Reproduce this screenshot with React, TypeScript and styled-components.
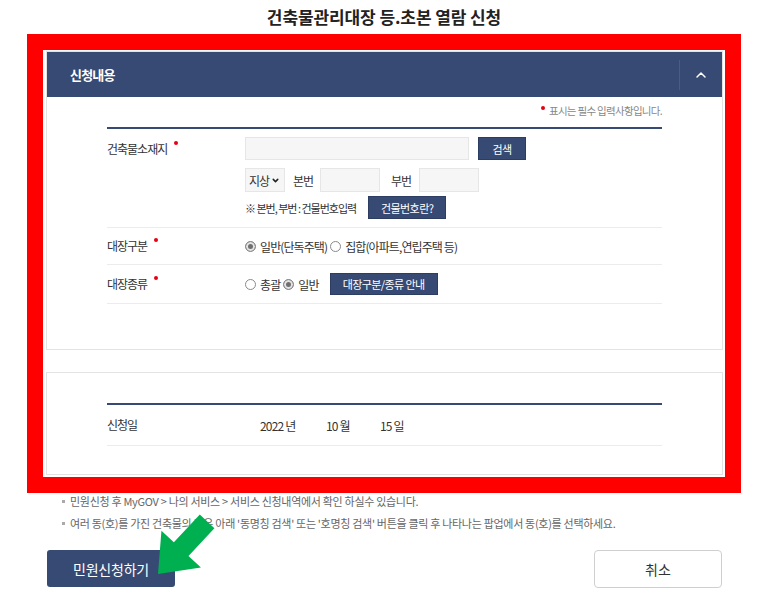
import styled, { createGlobalStyle } from "styled-components";
import { ChevronUp, ChevronDown } from "lucide-react";

const NAVY = "#374a73";

const GlobalStyle = createGlobalStyle`
  body {
    margin: 0;
    background: #fff;
    font-family: "Noto Sans CJK KR", "Noto Sans", sans-serif;
    color: #333;
  }
`;

const Page = styled.div`
  position: relative;
  width: 759px;
  height: 610px;
  overflow: hidden;
`;

const Wrap = styled.div`
  width: 714px;
  margin-left: 27px;
`;

const Title = styled.h1`
  margin: 0;
  height: 34px;
  line-height: 34px;
  text-align: center;
  font-size: 17px;
  font-weight: 700;
  letter-spacing: -0.1px;
  color: #222;
`;

const RedFrame = styled.div`
  border: 16px solid #ff0000;
  padding: 1px 2px 2px 3px;
  background: #fff;
`;

const Card = styled.div<{ $gap?: number }>`
  width: 677px;
  box-sizing: border-box;
  border: 1px solid #e3e3e3;
  margin-top: ${(p) => p.$gap ?? 0}px;
  background: #fff;
`;

const Header = styled.div`
  display: flex;
  align-items: center;
  height: 45px;
  background: ${NAVY};
  color: #fff;
`;

const HeaderTitle = styled.div`
  flex: 1;
  padding-left: 23px;
  font-size: 13px;
  font-weight: 700;
  letter-spacing: -0.8px;
`;

const Toggle = styled.div`
  width: 42px;
  height: 30px;
  display: flex;
  align-items: center;
  justify-content: center;
  border-left: 1px solid #4b5b82;
`;

const Body = styled.div<{ $top: number; $bottom: number }>`
  padding: ${(p) => p.$top}px 60px ${(p) => p.$bottom}px 60px;
`;

const Required = styled.div`
  height: 30px;
  padding-top: 7px;
  box-sizing: border-box;
  text-align: right;
  font-size: 10.5px;
  color: #888;
  letter-spacing: -0.7px;
  line-height: 14px;
`;

const Dot = styled.span`
  display: inline-block;
  width: 4px;
  height: 4px;
  border-radius: 50%;
  background: #e60012;
  margin-right: 4px;
  transform: translateY(-5px);
`;

const Table = styled.div`
  border-top: 2px solid ${NAVY};
`;

const Row = styled.div<{ $label: number; $pad: number; $align?: string }>`
  display: grid;
  grid-template-columns: ${(p) => p.$label}px 1fr;
  align-items: ${(p) => p.$align ?? "center"};
  padding: ${(p) => p.$pad}px 0;
  border-bottom: 1px solid #ececec;
`;

const Label = styled.div<{ $lineHeight?: number }>`
  font-size: 12px;
  letter-spacing: -1px;
  color: #333;
  line-height: ${(p) => p.$lineHeight ?? 20}px;
  ${Dot} {
    margin-left: 7px;
    margin-right: 0;
    transform: translateY(-9px);
  }
`;

const Stack = styled.div`
  display: flex;
  flex-direction: column;
`;

const Line = styled.div<{ $mt?: number }>`
  display: flex;
  align-items: center;
  margin-top: ${(p) => p.$mt ?? 0}px;
  font-size: 12px;
  letter-spacing: -1px;
`;

const Input = styled.div<{ $w: number; $h: number }>`
  width: ${(p) => p.$w}px;
  height: ${(p) => p.$h}px;
  box-sizing: border-box;
  background: #f6f6f6;
  border: 1px solid #e6e6e6;
`;

const Select = styled.div`
  width: 40px;
  height: 24px;
  box-sizing: border-box;
  background: #f6f6f6;
  border: 1px solid #e6e6e6;
  display: flex;
  align-items: center;
  gap: 2px;
  padding-left: 3px;
  font-size: 12px;
  letter-spacing: -1px;
  color: #333;
`;

const Word = styled.span<{ $ml: number; $w: number }>`
  margin-left: ${(p) => p.$ml}px;
  width: ${(p) => p.$w}px;
  color: #333;
`;

const NavyButton = styled.div<{ $w: number; $h: number; $ml: number }>`
  width: ${(p) => p.$w}px;
  height: ${(p) => p.$h}px;
  margin-left: ${(p) => p.$ml}px;
  box-sizing: border-box;
  background: ${NAVY};
  border: 1px solid #2d3d62;
  color: #fff;
  font-size: 11px;
  letter-spacing: -0.6px;
  display: flex;
  align-items: center;
  justify-content: center;
`;

const Hint = styled.span`
  font-size: 11px;
  letter-spacing: -1px;
  color: #333;
`;

const Radio = styled.span<{ $on?: boolean }>`
  display: inline-block;
  width: 9px;
  height: 9px;
  border-radius: 50%;
  border: 1px solid #8a8a8a;
  background: ${(p) => (p.$on ? "#6f6f6f" : "#fff")};
  box-shadow: ${(p) => (p.$on ? "inset 0 0 0 2px #e4e4e4" : "none")};
  margin-right: 4px;
  flex-shrink: 0;
`;

const Choice = styled.label`
  display: inline-flex;
  align-items: center;
  margin-right: 3px;
  font-size: 12px;
  letter-spacing: -0.9px;
  color: #333;
`;

const DateText = styled.span<{ $w: number }>`
  display: inline-block;
  width: ${(p) => p.$w}px;
  font-size: 12px;
  letter-spacing: -0.8px;
  color: #333;
`;

const Bottom = styled.div`
  width: 676px;
  margin-left: 47px;
`;

const Notes = styled.ul`
  list-style: none;
  margin: 0;
  padding: 0 0 0 15px;
`;

const Note = styled.li<{ $mt?: number }>`
  display: flex;
  align-items: center;
  margin-top: ${(p) => p.$mt ?? 0}px;
  height: 16px;
  font-size: 11px;
  letter-spacing: -0.3px;
  white-space: nowrap;
  color: #666;
  &::before {
    content: "";
    width: 3px;
    height: 3px;
    background: #aaa;
    margin-right: 5px;
  }
`;

const Actions = styled.div`
  display: flex;
  justify-content: space-between;
  margin-top: 19px;
`;

const Primary = styled.button`
  width: 128px;
  height: 37px;
  border: none;
  border-radius: 3px;
  background: ${NAVY};
  color: #fff;
  font-family: inherit;
  font-size: 14px;
  letter-spacing: -0.2px;
`;

const Secondary = styled.button`
  width: 128px;
  height: 38px;
  border: 1px solid #cfcfcf;
  border-radius: 4px;
  background: #fff;
  color: #333;
  font-family: inherit;
  font-size: 14px;
  margin-right: 1px;
`;

const Arrow = styled.svg`
  position: absolute;
  left: 0;
  top: 0;
  pointer-events: none;
`;

export default function App() {
  return (
    <Page>
      <GlobalStyle />
      <Wrap>
        <Title>건축물관리대장 등.초본 열람 신청</Title>
        <RedFrame>
          <Card>
            <Header>
              <HeaderTitle>신청내용</HeaderTitle>
              <Toggle>
                <ChevronUp size={16} strokeWidth={2.2} color="#fff" />
              </Toggle>
            </Header>
            <Body $top={0} $bottom={45}>
              <Required>
                <Dot />
                표시는 필수 입력사항입니다.
              </Required>
              <Table>
                <Row $label={138} $pad={8} $align="start">
                  <Label $lineHeight={23}>
                    건축물소재지
                    <Dot />
                  </Label>
                  <Stack>
                    <Line>
                      <Input $w={224} $h={23} />
                      <NavyButton $w={48} $h={23} $ml={9}>
                        검색
                      </NavyButton>
                    </Line>
                    <Line $mt={8}>
                      <Select>
                        지상
                        <ChevronDown size={9} strokeWidth={4} color="#222" />
                      </Select>
                      <Word $ml={8} $w={27}>본번</Word>
                      <Input $w={60} $h={24} />
                      <Word $ml={11} $w={28}>부번</Word>
                      <Input $w={60} $h={24} />
                    </Line>
                    <Line $mt={4}>
                      <Hint>※ 본번, 부번 : 건물번호입력</Hint>
                      <NavyButton $w={78} $h={23} $ml={12}>
                        건물번호란?
                      </NavyButton>
                    </Line>
                  </Stack>
                </Row>
                <Row $label={138} $pad={8}>
                  <Label>
                    대장구분
                    <Dot />
                  </Label>
                  <Line>
                    <Choice>
                      <Radio $on />
                      일반(단독주택)
                    </Choice>
                    <Choice>
                      <Radio />
                      집합(아파트,연립주택 등)
                    </Choice>
                  </Line>
                </Row>
                <Row $label={138} $pad={8}>
                  <Label>
                    대장종류
                    <Dot />
                  </Label>
                  <Line>
                    <Choice>
                      <Radio />
                      총괄
                    </Choice>
                    <Choice>
                      <Radio $on />
                      일반
                    </Choice>
                    <NavyButton $w={108} $h={22} $ml={8}>
                      대장구분/종류 안내
                    </NavyButton>
                  </Line>
                </Row>
              </Table>
            </Body>
          </Card>
          <Card $gap={22}>
            <Body $top={30} $bottom={28}>
              <Table>
                <Row $label={153} $pad={10}>
                  <Label>신청일</Label>
                  <Line>
                    <DateText $w={66}>2022 년</DateText>
                    <DateText $w={54}>10 월</DateText>
                    <DateText $w={40}>15 일</DateText>
                  </Line>
                </Row>
              </Table>
            </Body>
          </Card>
        </RedFrame>
      </Wrap>
      <Bottom>
        <Notes>
          <Note>
            민원신청 후 MyGOV &gt; 나의 서비스 &gt; 서비스 신청내역에서 확인 하실수 있습니다.
          </Note>
          <Note $mt={6}>
            여러 동(호)를 가진 건축물의 경우 아래 '동명칭 검색' 또는 '호명칭 검색' 버튼을 클릭 후
            나타나는 팝업에서 동(호)를 선택하세요.
          </Note>
        </Notes>
        <Actions>
          <Primary>민원신청하기</Primary>
          <Secondary>취소</Secondary>
        </Actions>
      </Bottom>
      <Arrow width="759" height="610" viewBox="0 0 759 610">
        <polygon
          transform="translate(158 574) rotate(-47)"
          points="0,0 34,-27 34,-10 72,-10 72,10 34,10 34,27"
          fill="#00b050"
        />
      </Arrow>
    </Page>
  );
}
